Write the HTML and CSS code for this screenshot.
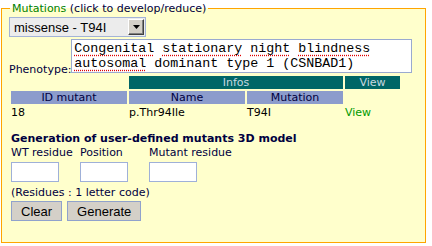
FILE: index.html
```html
<!DOCTYPE html>
<html lang="en">
<head>
    <meta charset="UTF-8">
    <title>Mutations</title>
    <link rel="stylesheet" href="styles.css">
</head>
<body>
    <fieldset class="mutations">
        <legend><span class="legend-title">Mutations</span> (click to develop/reduce)</legend>

        <div class="select-wrap">
            <select class="mut-select">
                <option>missense - T94I</option>
            </select>
            <span class="select-btn"><svg width="7" height="4" viewBox="0 0 7 4"><path d="M0 0h7L3.5 4z" fill="#000"/></svg></span>
        </div>

        <div class="pheno-row">
            <span class="pheno-label">Phenotype:</span>
            <div class="pheno-box"><span class="sp">Congenital</span> <span class="sp">stationary</span> <span class="sp">night</span> <span class="sp">blindness</span><br><span class="sp">autosomal</span> dominant type 1 (CSNBAD1)</div>
        </div>

        <table class="mut-table">
            <colgroup>
                <col class="c-id"><col class="c-name"><col class="c-mut"><col class="c-view">
            </colgroup>
            <tr>
                <td></td>
                <th class="dark" colspan="2">Infos</th>
                <th class="dark">View</th>
            </tr>
            <tr>
                <th class="light">ID mutant</th>
                <th class="light">Name</th>
                <th class="light">Mutation</th>
                <td></td>
            </tr>
            <tr class="data">
                <td>18</td>
                <td>p.Thr94Ile</td>
                <td>T94I</td>
                <td><a href="#" class="view-link">View</a></td>
            </tr>
        </table>

        <div class="gen">
            <h4 class="gen-title">Generation of user-defined mutants 3D model</h4>
            <div class="residue-grid">
                <label class="res-field">WT residue<input type="text"></label>
                <label class="res-field">Position<input type="text"></label>
                <label class="res-field">Mutant residue<input type="text"></label>
            </div>
            <p class="hint">(Residues : 1 letter code)</p>
            <div class="actions">
                <button type="button">Clear</button>
                <button type="button">Generate</button>
            </div>
        </div>
    </fieldset>
</body>
</html>
```

FILE: styles.css
```css
html, body { margin: 0; background: #fff; }

.mutations {
    margin: 2px 0 0 1px;
    width: 425px;
    box-sizing: border-box;
    padding: 0 7px 21px 7px;
    border: 1px solid #ffa500;
    background: #ffffcc;
    font-family: "DejaVu Sans", Verdana, sans-serif;
    font-size: 11px;
    line-height: 13px;
    color: #000040;
}

.mutations legend {
    margin-left: 1px;
    padding: 0 2px;
}

.legend-title {
    color: #008000;
}

/* select with the old windows arrow button */
.select-wrap {
    position: relative;
    width: 137px;
    height: 20px;
    margin-top: 2px;
}

.mut-select {
    appearance: none;
    -webkit-appearance: none;
    display: block;
    width: 137px;
    height: 20px;
    margin: 0;
    padding: 0 0 0 4px;
    border: 1px solid #a3b3d8;
    border-radius: 0;
    background: #ececec;
    font-family: "Liberation Sans", Arial, sans-serif;
    font-size: 13px;
    color: #000;
}

.select-btn {
    position: absolute;
    top: 2px;
    right: 2px;
    width: 16px;
    height: 16px;
    box-sizing: border-box;
    background: #d4d0c8;
    border: 1px solid;
    border-color: #fff #404040 #404040 #fff;
    box-shadow: inset -1px -1px 0 #808080;
    display: flex;
    align-items: center;
    justify-content: center;
    pointer-events: none;
}

.pheno-row {
    display: flex;
    align-items: flex-end;
    margin-top: 2px;
}

.pheno-label {
    margin-bottom: -3px;
}

.pheno-box {
    width: 341px;
    box-sizing: border-box;
    padding: 1px 2px;
    border: 1px solid #9aaad0;
    background: #fff;
    font-family: "Liberation Mono", "Courier New", monospace;
    font-size: 13.33px;
    line-height: 15px;
    color: #000;
    white-space: nowrap;
}

.sp {
    text-decoration: underline dotted #e00000;
    text-underline-offset: 3px;
}

.mut-table {
    border-spacing: 2px;
    margin-top: 1px;
    table-layout: fixed;
    width: 393px;
}

.c-id { width: 116px; }
.c-name { width: 116px; }
.c-mut { width: 96px; }
.c-view { width: 55px; }

.mut-table th, .mut-table td {
    padding: 0;
    height: 13px;
    font-weight: normal;
    white-space: nowrap;
}

.mut-table th.dark {
    background: #006666;
    color: #c8d8e0;
}

.mut-table th.light {
    background: #8c9ccc;
    color: #000040;
}

.mut-table .data td {
    color: #000;
    text-align: left;
}

.view-link {
    color: #009900;
    text-decoration: none;
}

.gen {
    padding-left: 2px;
}

.gen-title {
    margin: 11px 0 1px;
    font-size: 11px;
    font-weight: bold;
}

.residue-grid {
    display: grid;
    grid-template-columns: 69px 69px 69px;
}

.res-field {
    display: flex;
    flex-direction: column;
    gap: 3px;
    white-space: nowrap;
}

.res-field input {
    width: 48px;
    height: 20px;
    box-sizing: border-box;
    margin: 0;
    border: 1px solid #9fb0d8;
    background: #fff;
}

.hint {
    margin: 4px 0 2px;
}

.actions {
    display: flex;
    gap: 5px;
}

.actions button {
    height: 20px;
    margin: 0;
    padding: 0 9px;
    border: 1px solid #90a2cc;
    border-radius: 0;
    background: #d4d0c8;
    font-family: "Liberation Sans", Arial, sans-serif;
    font-size: 13px;
    color: #000;
}
```
